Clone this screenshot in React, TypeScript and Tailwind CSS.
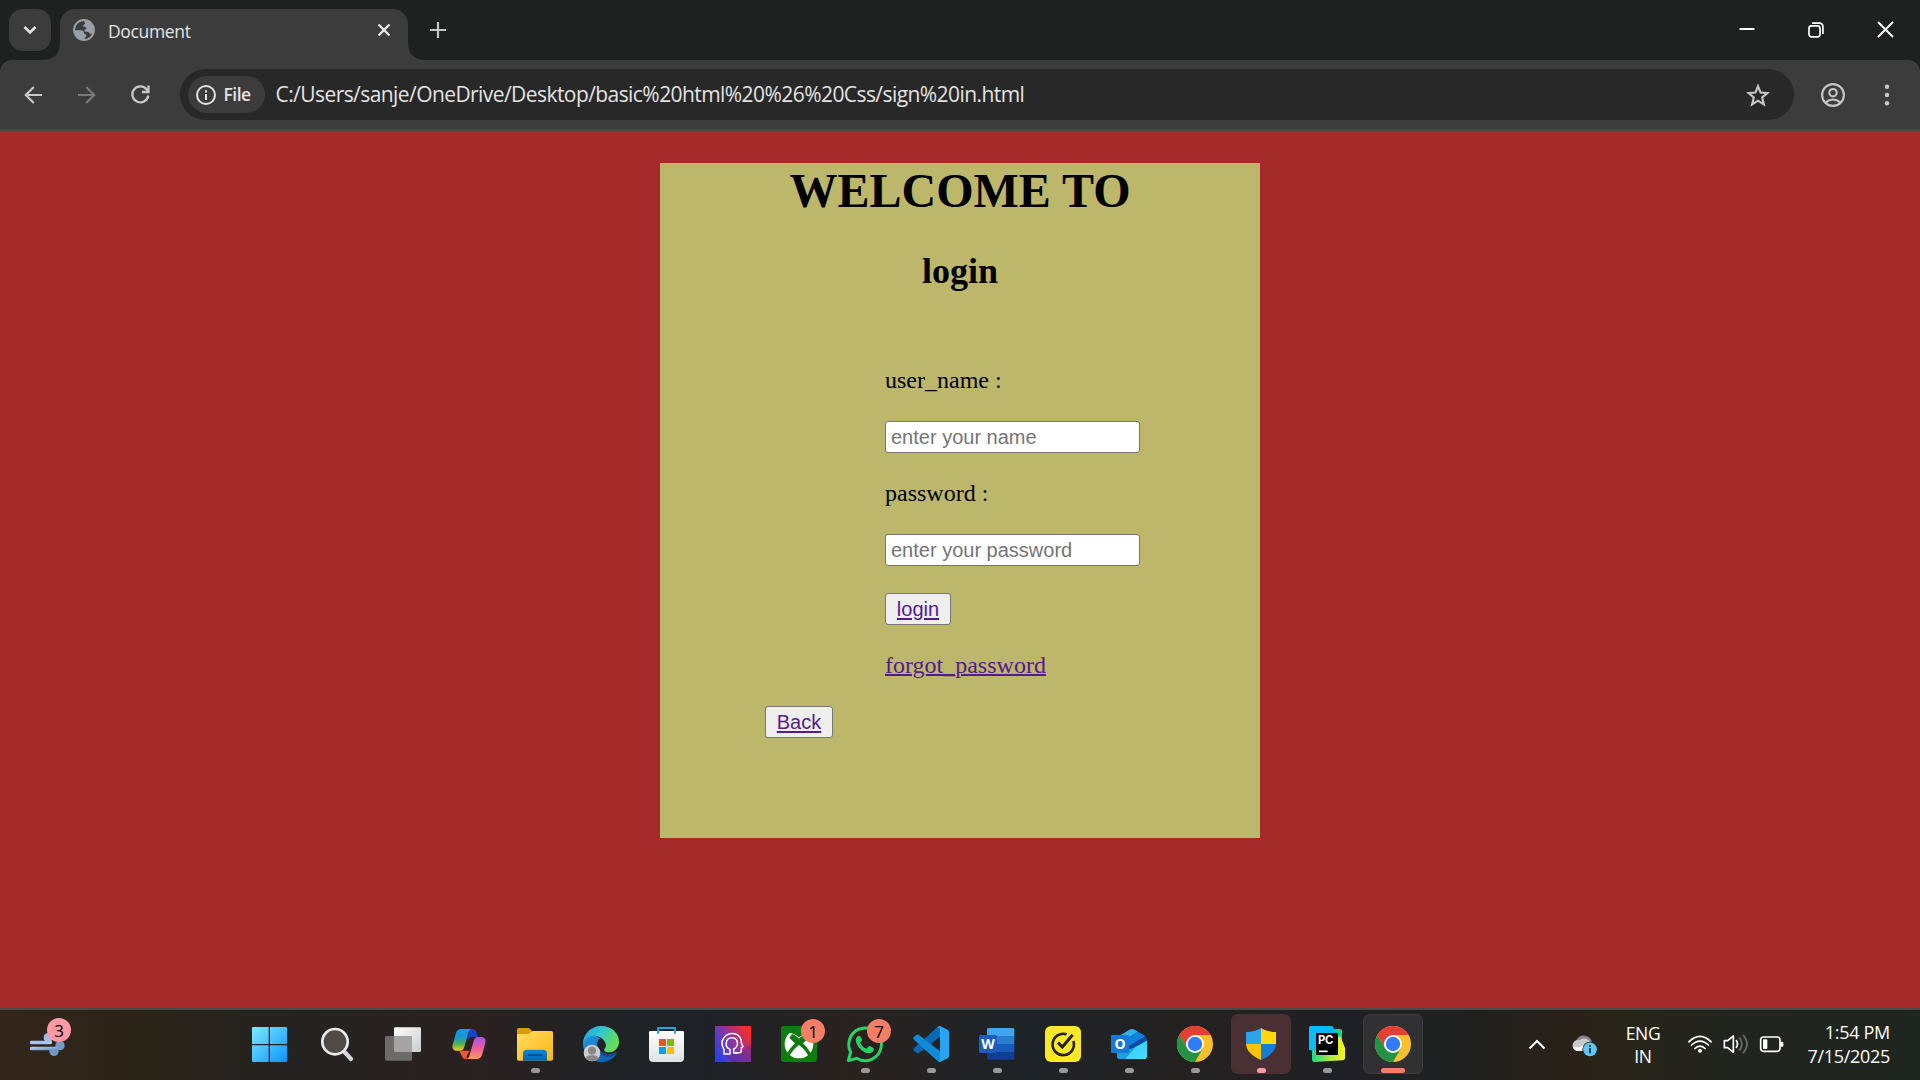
import React from "react";

const ui = "font-['Open_Sans','Noto_Sans',sans-serif]";

function TabStrip() {
  return (
    <div className="flex h-[60px] bg-[#1f2120]">
      <div className="flex h-[42px] w-[42px] shrink-0 items-center justify-center rounded-[14px] bg-[#3c3c3c] mt-[9px] ml-[9px]">
        <svg width="14" height="10" viewBox="0 0 14 10" fill="none" stroke="#e3e3e3" strokeWidth="2.6">
          <path d="M1.5 2l5.5 5.4L12.500 2" />
        </svg>
      </div>
      <svg width="18" height="60" viewBox="0 0 18 60" className="-ml-[9px] shrink-0">
        <path d="M0 60h18V42Q18 60 0 60z" fill="#3c3c3c" />
      </svg>
      <div className="mt-[9px] flex h-[51px] w-[348px] shrink-0 items-center rounded-t-[15px] bg-[#3c3c3c] pr-[17px] pl-[13px] pb-[10px]">
        <svg width="22" height="22" viewBox="0 0 64 64" className="mt-px">
          <circle cx="32" cy="32" r="29" fill="#3c3c3c" stroke="#9aa0a6" strokeWidth="5.500" />
          <path d="M33 3a29 29 0 0 1 27 37c-4 4-8 3-12 2c-1-5-5-5-10-5c-6 0-6-4-4-6c3-2 6-3 5-6c-2-3-7 0-9-4c-2-5 6-5 5-9c-1-3-3-4-2-9z" fill="#9aa0a6" />
          <path d="M3 33h20c6 0 9 3 9 8c0 4 7 3 7 8c0 4-6 4-6 12a30 30 0 0 1-30-28z" fill="#9aa0a6" />
        </svg>
        <span className={`${ui} ml-[13px] mt-[3px] text-[17.500px] tracking-[-0.35px] leading-[24px] text-[#e3e3e3]`}>Document</span>
        <svg width="14" height="14" viewBox="0 0 14 14" className="ml-auto" stroke="#e8e8e8" strokeWidth="2.3">
          <path d="M1.500 1.500l11 11M12.500 1.500l-11 11" />
        </svg>
      </div>
      <svg width="18" height="60" viewBox="0 0 18 60" className="shrink-0">
        <path d="M0 60h18Q0 60 0 42z" fill="#3c3c3c" />
      </svg>
      <svg width="16" height="16" viewBox="0 0 16 16" className="mt-[22px] ml-[4px] shrink-0" stroke="#c7c7c7" strokeWidth="2.200">
        <path d="M8 0v16M0 8h16" />
      </svg>
      <div className="ml-auto flex h-[60px] shrink-0 items-center pr-[26px]">
        <svg width="16" height="20" viewBox="0 0 16 20" className="mr-[53px]" stroke="#fff" strokeWidth="2">
          <path d="M0.500 9h15" />
        </svg>
        <svg width="16" height="16" viewBox="0 0 16 16" className="mr-[53px]" fill="none" stroke="#fff" strokeWidth="1.700">
          <rect x="1" y="3.800" width="11" height="11" rx="2.500" />
          <path d="M4 1.200h7.500a3.400 3.400 0 0 1 3.400 3.400V12" />
        </svg>
        <svg width="17" height="17" viewBox="0 0 17 17" className="-mt-px" stroke="#fff" strokeWidth="1.900">
          <path d="M1 1l15 15M16 1L1 16" />
        </svg>
      </div>
    </div>
  );
}

function Toolbar() {
  return (
    <div className="bg-[#1f2120]">
      <div className="flex h-[71px] items-start rounded-t-[12px] border-b-2 border-[#484a4a] bg-[#3c3c3c] pt-[9px]">
        <div className="flex h-[51px] w-[180px] shrink-0 items-center pl-[24px]">
          <svg width="18" height="18" viewBox="0 0 18 18" fill="none" stroke="#c7c7c7" strokeWidth="2.200">
            <path d="M18 9H2M9.800 1L1.800 9l8 8" />
          </svg>
          <svg width="18" height="18" viewBox="0 0 18 18" className="ml-[36px]" fill="none" stroke="#7b7b7b" strokeWidth="2.200">
            <path d="M0 9h16M8.200 1l8 8-8 8" />
          </svg>
          <svg width="19" height="19" viewBox="0 0 19 19" className="ml-[35px]" fill="none" stroke="#c7c7c7" strokeWidth="2.300">
            <path d="M17.300 10.500A8 8 0 1 1 15.500 4.200L17.500 6.500" />
            <path d="M17.500 0.500V7h-6.500" />
          </svg>
        </div>
        <div className="flex h-[51px] w-[1614px] shrink-0 items-center rounded-full bg-[#282828] pl-[7.500px] pr-[24px]">
          <div className="flex h-[37px] w-[77px] shrink-0 items-center rounded-full bg-[#3c3c3c] pl-[8px]">
            <svg width="20" height="20" viewBox="0 0 20 20" fill="none" stroke="#e3e3e3" strokeWidth="2">
              <circle cx="10" cy="10" r="9" />
              <path d="M10 9v6M10 5.200v2.200" />
            </svg>
            <span className={`${ui} -mt-px ml-[8px] text-[17.500px] font-semibold tracking-[-0.5px] leading-[24px] text-[#e3e3e3]`}>File</span>
          </div>
          <span className={`${ui} -mt-[2px] ml-[11px] whitespace-nowrap text-[21px] leading-[30px] tracking-[-0.570px] text-[#e3e3e3]`}>
            C:/Users/sanje/OneDrive/Desktop/basic%20html%20%26%20Css/sign%20in.html
          </span>
          <svg width="24" height="24" viewBox="0 0 24 24" className="ml-auto" fill="none" stroke="#c7c7c7" strokeWidth="2.100">
            <path d="M12 3.200l2.500 6.300 7 .5-5.300 4.500 1.700 6.900L12 17.700l-5.900 3.700 1.700-6.900L2.500 10l7-.5z" />
          </svg>
        </div>
        <svg width="24" height="24" viewBox="0 0 24 24" className="mt-[14px] ml-[27px] shrink-0" fill="none" stroke="#c7c7c7" strokeWidth="2.100">
          <circle cx="12" cy="12" r="10.900" />
          <circle cx="12" cy="9.700" r="3.700" />
          <path d="M4.600 19.500c4.500-3.900 10.300-3.900 14.800 0" />
        </svg>
        <svg width="6" height="24" viewBox="0 0 6 24" className="mt-[14px] ml-[39px] shrink-0" fill="#c7c7c7">
          <circle cx="3" cy="3.700" r="2.200" />
          <circle cx="3" cy="12" r="2.200" />
          <circle cx="3" cy="20.300" r="2.200" />
        </svg>
      </div>
    </div>
  );
}

const field =
  "block h-[32px] w-[255px] rounded-[3px] border border-[#767676] bg-white px-[5px] font-['Liberation_Sans',Arial,sans-serif] text-[20px] leading-[30px] placeholder:text-[#757575] placeholder:opacity-100";
const linkButton =
  "block h-[32px] rounded-[3px] border border-[#767676] bg-[#efefef] font-['Liberation_Sans',Arial,sans-serif] text-[20px] leading-[30px] text-[#551a8b] underline decoration-2 underline-offset-2 [text-decoration-skip-ink:auto]";

function Page() {
  return (
    <main className="h-[877px] bg-[#a52a2a] pt-[32px]">
      <div className="mx-auto h-[675px] w-[600px] bg-[#bdb76b] font-['Liberation_Serif','Times_New_Roman',serif] text-black">
        <h1 className="h-[56px] text-center text-[48px] font-bold leading-[56px]">WELCOME TO</h1>
        <h2 className="mt-[32px] h-[41px] text-center text-[36px] font-bold leading-[41px]">login</h2>
        <div className="mt-[75px] ml-[225px] text-[24px] leading-[27px]">
          <p>user_name :</p>
          <input className={`${field} mt-[27px]`} placeholder="enter your name" />
          <p className="mt-[27px]">password :</p>
          <input className={`${field} mt-[27px]`} placeholder="enter your password" />
          <button className={`${linkButton} mt-[27px] w-[66px]`}>login</button>
          <p className="mt-[27px] text-[#551a8b] underline decoration-2">forgot_password</p>
        </div>
        <button className={`${linkButton} mt-[27px] ml-[105px] w-[68px]`}>Back</button>
      </div>
    </main>
  );
}

type SlotProps = {
  cx: number;
  run?: "idle" | "alert" | "active";
  tile?: string;
  outline?: string;
  badge?: string;
  children: React.ReactNode;
};

/* Each icon is drawn on a 180-unit canvas centred on cx, shown at 60px. */
function Slot({ cx, run, tile, outline, badge, children }: SlotProps) {
  return (
    <div className="relative h-[60px] w-[60px] shrink-0">
      <svg width="60" height="60" viewBox={`${cx - 90} 42 180 180`}>
        {tile && <rect x={cx - 88.5} y="43.500" width="177" height="177" rx="18" fill={tile} stroke={outline} strokeWidth="3" />}
        {children}
        {run === "idle" && <rect x={cx - 12} y="204" width="27" height="15" rx="7.500" fill="#999" />}
        {run === "alert" && <rect x={cx - 12} y="204" width="27" height="15" rx="7.500" fill="#ff99a4" />}
        {run === "active" && <rect x={cx - 36} y="204" width="72" height="15" rx="7.500" fill="#f47f66" />}
      </svg>
      {badge && (
        <span className={`${ui} absolute top-[5px] left-[32px] flex h-[24px] w-[24px] items-center justify-center rounded-full bg-[#f47f66] text-[17px] leading-none text-black`}>
          {badge}
        </span>
      )}
    </div>
  );
}

function Chrome({ cx }: { cx: number }) {
  return (
    <g transform={`translate(${cx} 132)`}>
      <circle r="54" fill="#fbc12d" />
      <path d="M-46.800-27A54 54 0 0 1 46.800-27H0L-23.400 13.500z" fill="#e53e33" />
      <path d="M-46.800-27A54 54 0 0 0 0 54L23.400 13.500 0 27-23.400 13.500z" fill="#249346" />
      <circle r="27" fill="#fff" />
      <circle r="21.500" fill="#2f7cf6" />
    </g>
  );
}

function Taskbar() {
  return (
    <footer className="flex h-[72px] items-start border-t-2 border-[#484a4a] bg-[linear-gradient(90deg,#33251a_0%,#2b2419_8%,#242322_15%,#2a2120_25%,#1f2225_32%,#1e2227_37%,#29221f_44%,#1e2327_53%,#242120_62%,#1f2025_70%,#20211f_77%,#2a2119_82%,#292519_84%,#22241f_90%,#1f251f_100%)]">
      <div className="relative ml-[30px] mt-[22px] h-[24px] w-[36px] shrink-0">
        <svg width="36" height="24" viewBox="90 96 108 72" fill="none">
          <defs>
            <linearGradient id="wind" x1="0" y1="0" x2="1" y2="1">
              <stop offset="0" stopColor="#b9d2f2" />
              <stop offset="1" stopColor="#668ebd" />
            </linearGradient>
          </defs>
          <circle cx="145" cy="113" r="14" fill="#9fbbe4" />
          <circle cx="180" cy="137" r="14" fill="#7899c8" />
          <circle cx="162" cy="154" r="14" fill="#7197c2" />
          <rect x="90" y="122" width="66" height="11" rx="4" fill="#a9c4ed" />
          <rect x="90" y="140" width="84" height="11" rx="4" fill="url(#wind)" />
        </svg>
        <span className={`${ui} absolute -top-[14px] left-[17px] flex h-[24px] w-[24px] items-center justify-center rounded-full bg-[#ff99a4] text-[17px] leading-none text-black`}>3</span>
      </div>

      <nav className="ml-[175px] mt-[4px] flex gap-[6px]">
        <Slot cx={813}>
          <defs>
            <linearGradient id="win" x1="756" y1="81" x2="861" y2="186" gradientUnits="userSpaceOnUse">
              <stop offset="0" stopColor="#7deaff" />
              <stop offset="1" stopColor="#0a93ff" />
            </linearGradient>
          </defs>
          <path d="M759 81h47v51h-50V84q0-3 3-3zM810 81h48q3 0 3 3v48h-51zM756 136h50v50h-47q-3 0-3-3zM810 136h51v47q0 3-3 3h-48z" fill="url(#win)" />
        </Slot>
        <Slot cx={1011}>
          <path d="M1031 153l22 24" stroke="#d5d6d8" strokeWidth="13" strokeLinecap="round" />
          <circle cx="1005" cy="125" r="38" fill="#504a47" stroke="#eceded" strokeWidth="8" />
        </Slot>
        <Slot cx={1209}>
          <defs>
            <linearGradient id="tv" x1="0" y1="0" x2="1" y2="1">
              <stop offset="0" stopColor="#fff" />
              <stop offset="1" stopColor="#c9cacb" />
            </linearGradient>
          </defs>
          <rect x="1182" y="82" width="81" height="74" rx="4" fill="url(#tv)" />
          <rect x="1155" y="108" width="81" height="74" rx="4" fill="#6c6b6a" />
          <path d="M1182 108h54v48h-50q-4 0-4-4z" fill="#a5a4a3" />
        </Slot>
        <Slot cx={147}>
          <defs>
            <linearGradient id="cpA" x1="0" y1="0" x2="0" y2="1">
              <stop offset="0" stopColor="#159bea" />
              <stop offset="0.4" stopColor="#1b94c8" />
              <stop offset="0.7" stopColor="#55b34f" />
              <stop offset="1" stopColor="#f3cf0e" />
            </linearGradient>
            <linearGradient id="cpB" x1="0" y1="0" x2="0" y2="1">
              <stop offset="0" stopColor="#a153e8" />
              <stop offset="0.500" stopColor="#ee5a9e" />
              <stop offset="1" stopColor="#ff9b5c" />
            </linearGradient>
          </defs>
          <path d="M148 87h9c8 0 11 5 13 12l4 12h-16c-8 0-12 4-15 12z" fill="#1642cf" />
          <path d="M118 152h31l-8 14c-2 6-2 11 4 11h-8c-8 0-11-5-13-12z" fill="#f0562e" />
          <path d="M123 87h34c-7 0-10 4-12 12l-12 42c-2 7-6 11-13 11h-10c-9 0-15-7-12-18l9-32c3-10 8-15 16-15z" fill="url(#cpA)" />
          <path d="M171 177h-34c7 0 10-4 12-12l12-42c2-8 6-12 13-12h10c9 0 15 7 12 18l-9 33c-3 10-8 15-16 15z" fill="url(#cpB)" />
        </Slot>
        <Slot cx={345} run="idle">
          <defs>
            <linearGradient id="fold" x1="0" y1="0" x2="1" y2="1">
              <stop offset="0" stopColor="#ffdb65" />
              <stop offset="1" stopColor="#fbb90f" />
            </linearGradient>
            <linearGradient id="foldBlue" x1="0" y1="0" x2="0" y2="1">
              <stop offset="0" stopColor="#1585d8" />
              <stop offset="1" stopColor="#0565b5" />
            </linearGradient>
          </defs>
          <path d="M291 89q0-5 5-5h27q5 0 8 4l6 6v14h-46z" fill="#dd9b05" />
          <path d="M291 102h32q4 0 7-3l5-4q2-2 5-2h54q5 0 5 5v79q0 5-5 5h-98q-5 0-5-5z" fill="url(#fold)" />
          <path d="M309 182v-22q0-11 11-11h50q11 0 11 11v22z" fill="url(#foldBlue)" />
          <path d="M325 165h41" stroke="#064a85" strokeWidth="5" strokeLinecap="round" />
        </Slot>
        <Slot cx={543}>
          <defs>
            <linearGradient id="edgeTop" x1="0" y1="0" x2="1" y2="0.400">
              <stop offset="0" stopColor="#1fa5dc" />
              <stop offset="0.500" stopColor="#31c5d2" />
              <stop offset="1" stopColor="#66dc55" />
            </linearGradient>
            <linearGradient id="edgeLow" x1="0" y1="0" x2="1" y2="1">
              <stop offset="0" stopColor="#1e9ae4" />
              <stop offset="1" stopColor="#0d55a8" />
            </linearGradient>
          </defs>
          <path d="M489 132c0 30 24 54 56 54 20 0 36-10 44-25 2-4-1-5-4-3-18 9-45 3-52-17-5-12 0-21 7-25-12-15-45-17-51 16z" fill="url(#edgeLow)" />
          <path d="M536 121c-12 14-8 42 20 49 12 2 23 0 31-8 3-3-1-5-4-3-22 9-47 0-50-20-1-8 0-13 3-18z" fill="#0e4b92" />
          <path d="M489 132c0-30 24-54 54-54 32 0 54 21 54 47 0 20-15 32-30 32-10 0-17-4-14-9 5-6 6-13 3-19-5-13-18-22-33-22-17 0-30 10-34 25z" fill="url(#edgeTop)" />
          <circle cx="516" cy="159" r="25" fill="#d0cecd" />
          <circle cx="516" cy="152" r="12.500" fill="#8b8786" />
          <path d="M498 176c0-8 6-10 18-10s18 2 18 10q-18 15-36 0z" fill="#8b8786" />
        </Slot>
        <Slot cx={741}>
          <defs>
            <linearGradient id="bag" x1="0" y1="0" x2="0" y2="1">
              <stop offset="0" stopColor="#fff" />
              <stop offset="1" stopColor="#e0e2e5" />
            </linearGradient>
          </defs>
          <path d="M687 97q0-4 4-4h97q4 0 4 4v77q0 12-12 12h-81q-12 0-12-12z" fill="url(#bag)" />
          <path d="M714 101V84h51v17" fill="none" stroke="#1ba7e2" strokeWidth="6" strokeLinejoin="round" />
          <path d="M717 117h21v21h-21z" fill="#f25022" />
          <path d="M741 117h21v21h-21z" fill="#7fba00" />
          <path d="M717 141h21v21h-21z" fill="#00a4ef" />
          <path d="M741 141h21v21h-21z" fill="#ffb900" />
        </Slot>
        <Slot cx={129}>
          <defs>
            <linearGradient id="head" x1="75" y1="160" x2="175" y2="95" gradientUnits="userSpaceOnUse">
              <stop offset="0" stopColor="#2b3ff0" />
              <stop offset="0.500" stopColor="#8436a8" />
              <stop offset="1" stopColor="#fb2a2a" />
            </linearGradient>
          </defs>
          <rect x="75" y="78" width="108" height="108" fill="url(#head)" />
          <path d="M104 164l22 22h57v-55l-26 23z" fill="#5b2a94" opacity="0.5" />
          <g fill="none" stroke="#fff" strokeWidth="4.500" strokeLinejoin="round">
            <path d="M102 164v-16c-8-13-7-27 1-36 12-15 36-15 47 0 4 6 5 12 4 17l5 11-5 3v9q0 6-6 6h-14" />
            <path d="M104 162h16v-14c-9-4-13-12-11-21 3-18 29-19 33-1 2 10-3 17-11 21v12h12" />
          </g>
        </Slot>
        <Slot cx={327} badge="1">
          <rect x="273" y="78" width="108" height="108" rx="9" fill="#107c10" />
          <circle cx="327" cy="132" r="43" fill="#fff" />
          <path d="M294 100c8-4 19 1 33 12 14-11 25-16 33-12-8-8-18-12-33-12s-25 4-33 12z" fill="#107c10" />
          <path d="M306 102c8 2 14 7 21 14 7-7 13-12 21-14l8 12-17 16c14 15 25 28 25 37l-8 1c-8-14-18-24-29-33-11 9-21 19-29 33l-8-1c0-9 11-22 25-37l-17-16z" fill="#107c10" />
        </Slot>
        <Slot cx={525} run="idle" badge="7">
          <path d="M475 182l7-26a49 49 0 1 1 18 19z" fill="none" stroke="#25d366" strokeWidth="9" strokeLinejoin="round" />
          <path d="M505 107c-6 3-9 10-7 18 5 18 21 32 37 35 9 1 16-5 17-13 0-3-11-9-14-9s-6 8-9 8c-8-3-15-10-18-18 0-3 6-5 5-9-1-3-4-13-11-12z" fill="#25d366" />
        </Slot>
        <Slot cx={723} run="idle">
          <path d="M671 151l8 7q4 3 8 0l63-48V79l-10 4-68 61q-4 4-1 7z" fill="#0869b4" />
          <path d="M671 112l8-7q4-3 8 0l63 49v30l-10-3-68-62q-4-4-1-7z" fill="#0f8bd8" />
          <path d="M750 78l23 11q4 2 4 7v72q0 5-4 7l-23 11q-5 0-10-5 10 3 10-6V89q0-8-10-6 5-5 10-5z" fill="#27a5f3" />
        </Slot>
        <Slot cx={111} run="idle">
          <path d="M81 108V88q0-4 4-4h74q4 0 4 4v20z" fill="#41a5ee" />
          <path d="M81 108h82v24H81z" fill="#2b7cd3" />
          <path d="M81 132h82v24H81z" fill="#185abd" />
          <path d="M81 156h82v19q0 4-4 4H85q-4 0-4-4z" fill="#103f91" />
          <rect x="57" y="105" width="54" height="54" rx="4" fill="#1b5cbe" />
          <text x="84" y="147" textAnchor="middle" fontFamily="Open Sans, sans-serif" fontWeight="700" fontSize="42" fill="#fff">W</text>
        </Slot>
        <Slot cx={309} run="idle">
          <rect x="255" y="78" width="108" height="108" rx="18" fill="#fee823" />
          <path d="M320 103a32 32 0 1 0 20 20" fill="none" stroke="#222" strokeWidth="8" />
          <path d="M294 128l13 13 31-37" fill="none" stroke="#222" strokeWidth="9" />
        </Slot>
        <Slot cx={507} run="idle">
          <defs>
            <linearGradient id="olk" x1="0" y1="0" x2="1" y2="1">
              <stop offset="0" stopColor="#2ccbf5" />
              <stop offset="1" stopColor="#48dcff" />
            </linearGradient>
          </defs>
          <path d="M471 112l38-23q7-4 14 0l31 18q7 4 7 12v48q0 10-10 10h-70q-10 0-10-10z" fill="#0a74d1" />
          <path d="M471 112l38-23q7-4 14 0l10 6-62 38z" fill="#2fb2ea" />
          <path d="M490 128l43-33 22 13-56 36z" fill="#0f82dd" />
          <path d="M496 145l59-37q6 4 6 12l-60 36z" fill="#06489b" />
          <path d="M561 122v45q0 10-10 10h-70q-8 0-10-6z" fill="url(#olk)" />
          <path d="M471 160l55-18-30 35h-15q-10 0-10-10z" fill="#1c9fe0" />
          <rect x="453" y="105" width="54" height="54" rx="4" fill="#1579d8" />
          <text x="480" y="147" textAnchor="middle" fontFamily="Open Sans, sans-serif" fontWeight="700" fontSize="42" fill="#fff">O</text>
        </Slot>
        <Slot cx={705} run="idle">
          <Chrome cx={705} />
        </Slot>
        <Slot cx={183} run="alert" tile="#4b3033" outline="#4d3235">
          <path d="M183 84c-13 9-28 11-45 12v36h45z" fill="#2ba3e8" />
          <path d="M183 84c13 9 28 11 45 12v36h-45z" fill="#fed70c" />
          <path d="M138 132c1 20 18 36 45 48v-48z" fill="#fdc30b" />
          <path d="M228 132c-1 20-18 36-45 48v-48z" fill="#127fd6" />
        </Slot>
        <Slot cx={381} run="idle">
          <defs>
            <linearGradient id="pcA" x1="0" y1="0" x2="1" y2="0.300">
              <stop offset="0" stopColor="#05c3fa" />
              <stop offset="1" stopColor="#07b3f0" />
            </linearGradient>
            <linearGradient id="pcB" x1="0" y1="0" x2="1" y2="0">
              <stop offset="0" stopColor="#18dc83" />
              <stop offset="0.600" stopColor="#b5e93a" />
              <stop offset="1" stopColor="#fcf41c" />
            </linearGradient>
          </defs>
          <path d="M390 87h31q5 0 5 5v30h-30z" fill="#16d58b" />
          <path d="M336 150h60l16-40h10l13 34v30q0 6-6 7l-85 5q-8 0-8-8z" fill="url(#pcB)" />
          <path d="M327 83q0-5 5-5h62q3 0 5 3l12 20-60 50h-19q-5 0-5-5z" fill="url(#pcA)" />
          <rect x="348" y="99" width="66" height="66" fill="#000" />
          <text x="354" y="132" fontFamily="Inter, sans-serif" fontWeight="700" fontSize="34" letterSpacing="-1" fill="#fff">PC</text>
          <path d="M357 154h26" stroke="#fff" strokeWidth="5" />
        </Slot>
        <Slot cx={579} run="active" tile="#313134" outline="#3d3d40">
          <Chrome cx={579} />
        </Slot>
      </nav>

      <div className="ml-auto flex h-[70px] shrink-0 items-center pr-[30px] text-white">
        <svg width="18" height="12" viewBox="0 0 18 12" fill="none" stroke="#fff" strokeWidth="2">
          <path d="M1.500 9.500L9 2l7.500 7.500" />
        </svg>
        <svg width="26" height="22" viewBox="217 105 78 66" className="ml-[26px] mt-[2px]">
          <path d="M230 121a25 25 0 0 1 47 6l-32 20z" fill="#858585" />
          <path d="M238 153a17 17 0 1 1 3-33c10-8 28-5 32 10l-8 23z" fill="#c9c9c7" />
          <path d="M220 140q16 6 32-6v19h-14q-16 0-18-13z" fill="#fff" />
          <circle cx="271" cy="148" r="23" fill="#282519" />
          <circle cx="271" cy="148" r="20.500" fill="#5ac8fb" />
          <path d="M271 144v16M271 135v6" stroke="#10242e" strokeWidth="5" />
        </svg>
        <div className={`${ui} ml-[20px] flex w-[50px] flex-col items-center text-[17.500px] leading-[23px] tracking-[-0.3px]`}>
          <span>ENG</span>
          <span>IN</span>
        </div>
        <svg width="26" height="20" viewBox="558 100 78 60" className="-mt-[2px] ml-[19px]" fill="none" stroke="#fff" strokeWidth="5">
          <path d="M562 125q35-36 70 0M570 135q27-27 54 0M580 145q17-17 34 0" />
          <circle cx="597" cy="150" r="6" fill="#fff" stroke="none" />
        </svg>
        <svg width="26" height="22" viewBox="667 99 78 66" className="-mt-[2px] ml-[10px]" fill="none" stroke="#fff" strokeWidth="5" strokeLinejoin="round">
          <path d="M671 122h10l17-14v49l-17-14h-10z" />
          <path d="M706 120q9 12 0 24" />
          <path d="M716 112q15 20 0 40M727 105q24 27 0 54" stroke="#6e706c" />
        </svg>
        <svg width="26" height="18" viewBox="775 105 78 54" className="-mt-[2px] ml-[10px]" fill="none" stroke="#fff" strokeWidth="5">
          <rect x="780" y="111" width="58" height="43" rx="9" />
          <rect x="787" y="118" width="13" height="29" rx="3" fill="#fff" stroke="none" />
          <path d="M841 127h5v11h-5z" fill="#fff" strokeWidth="4" strokeLinejoin="round" />
        </svg>
        <div className={`${ui} ml-[21px] -mt-[3px] flex w-[84px] flex-col items-end whitespace-nowrap text-[18px] leading-[24px] tracking-[-0.3px]`}>
          <span>1:54 PM</span>
          <span>7/15/2025</span>
        </div>
      </div>
    </footer>
  );
}

export default function App() {
  return (
    <div className="flex h-[1080px] w-[1920px] flex-col overflow-hidden">
      <TabStrip />
      <Toolbar />
      <Page />
      <Taskbar />
    </div>
  );
}
